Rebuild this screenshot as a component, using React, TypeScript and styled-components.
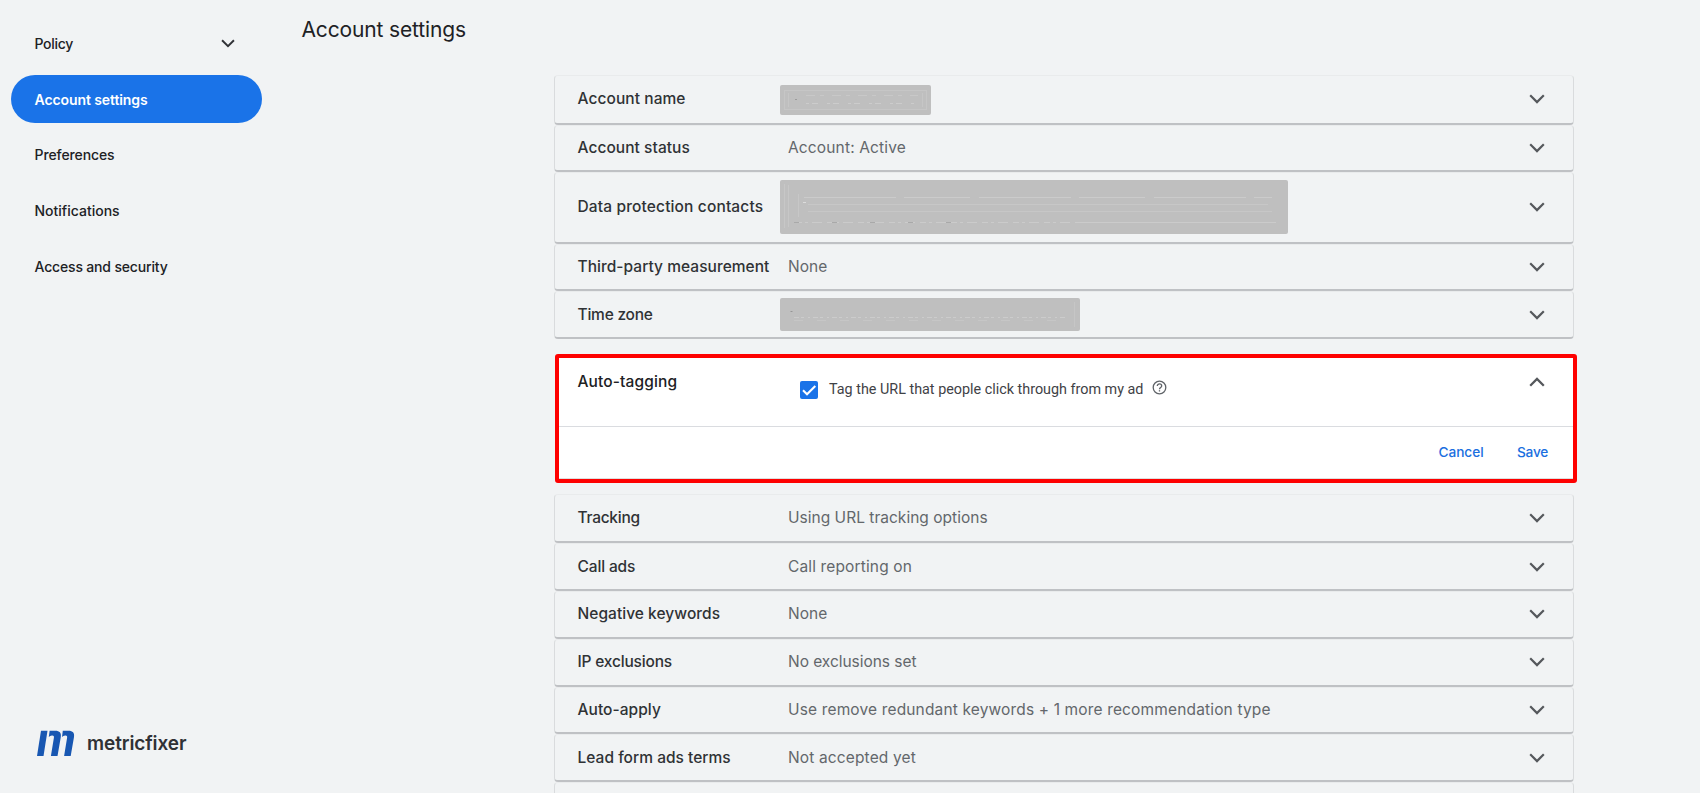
import React from 'react';
import styled, { createGlobalStyle } from 'styled-components';

const GlobalStyle = createGlobalStyle`
  * { box-sizing: border-box; }
  body {
    margin: 0;
    background: #f1f3f4;
    font-family: Inter, 'Liberation Sans', sans-serif;
    color: #202124;
    overflow: hidden;
  }
`;

const Page = styled.div`
  display: flex;
  width: 100%;
  height: 793px;
  overflow: hidden;
  background: #f1f3f4;
`;

const Sidebar = styled.aside`
  display: flex;
  flex-direction: column;
  flex-shrink: 0;
  width: 301.5px;
  height: 100%;
  padding: 19.5px 40px 36px 11px;
`;

const Nav = styled.nav`
  display: flex;
  flex-direction: column;
  gap: 7.75px;
`;

const NavItem = styled.a<{ $active?: boolean; $track?: number }>`
  display: flex;
  align-items: center;
  justify-content: space-between;
  height: 48px;
  padding: 0 26.5px 0.5px 23.5px;
  border-radius: 24px;
  background: ${(p) => (p.$active ? '#1a73e8' : 'transparent')};
  color: ${(p) => (p.$active ? '#fff' : '#202124')};
  font-size: 14px;
  font-weight: ${(p) => (p.$active ? 600 : 500)};
  letter-spacing: ${(p) => p.$track ?? 0}px;
`;

const Brand = styled.div`
  display: flex;
  align-items: center;
  gap: 12px;
  margin-top: auto;
  padding-left: 26px;
`;

const BrandName = styled.span`
  font-size: 19px;
  line-height: 24px;
  font-weight: 600;
  letter-spacing: -0.1px;
  color: #2f3135;
`;

const Main = styled.main`
  display: flex;
  flex-direction: column;
  flex: 1;
`;

const Title = styled.h1`
  flex-shrink: 0;
  height: 75px;
  margin: 0;
  padding-top: 16px;
  font-size: 21px;
  line-height: 28px;
  font-weight: 400;
  letter-spacing: -0.14px;
`;

const Panels = styled.div`
  display: flex;
  flex-direction: column;
  width: 1020px;
  margin-left: 252px;
`;

const Row = styled.section<{ $height: number }>`
  display: grid;
  grid-template-columns: 210.5px 1fr auto;
  align-items: center;
  flex-shrink: 0;
  height: ${(p) => p.$height}px;
  padding: 0 27.5px 0 23px;
  border: 1px solid #d9dbdd;
  border-top-color: #e9ebec;
  border-bottom: 2px solid #bfc1c4;
  border-radius: 4px;
`;

const Label = styled.span<{ $track?: number }>`
  font-size: 15.5px;
  line-height: 20px;
  font-weight: 500;
  color: #2f3235;
  white-space: nowrap;
  letter-spacing: ${(p) => p.$track ?? 0}px;
`;

const Value = styled(Label)`
  font-weight: 400;
  color: #63676b;
`;

const Redaction = styled.div<{ $width: number; $height: number; $shift?: number }>`
  width: ${(p) => p.$width}px;
  height: ${(p) => p.$height}px;
  margin: ${(p) => p.$shift ?? 0}px 0 0 -8.5px;
  border-radius: 2px;
  background: #bfbfbf;
  svg { display: block; }
`;

const Highlight = styled.section`
  display: flex;
  flex-direction: column;
  flex-shrink: 0;
  width: 1022.5px;
  height: 129px;
  margin: 14.5px 0 11px 1px;
  border: 4px solid #fe0000;
  border-radius: 3px;
  background: #fff;
`;

const HighlightBody = styled.div`
  display: grid;
  grid-template-columns: 222.5px 1fr auto;
  align-items: start;
  height: 69px;
  padding: 14px 28px 0 19px;
  border-bottom: 1px solid #dadce0;
`;

const HighlightTitle = styled(Label)`
  color: #202124;
`;

const Option = styled.label`
  display: flex;
  align-items: center;
  height: 20px;
  margin-top: 8px;
`;

const Checkbox = styled.span`
  display: flex;
  width: 18px;
  height: 18px;
  border-radius: 2px;
  background: #1a73e8;
`;

const OptionText = styled.span`
  margin: -1px 9px 0 11px;
  font-family: Roboto, sans-serif;
  font-size: 14.36px;
  color: #3f4246;
`;

const HelpIcon = styled.svg`
  margin-top: -4px;
`;

const Actions = styled.div`
  display: flex;
  justify-content: flex-end;
  align-items: center;
  flex: 1;
  gap: 33.5px;
  padding-right: 25px;
  border-bottom: 1px solid #dedede;
`;

const TextButton = styled.button<{ $track: number }>`
  padding: 0;
  border: 0;
  background: none;
  color: #1a6fe0;
  font: 500 13.7px/20px Inter, sans-serif;
  letter-spacing: ${(p) => p.$track}px;
`;

function Chevron({ small }: { small?: boolean }) {
  return (
    <svg width={small ? 14 : 16} height={small ? 9 : 10} viewBox="0 0 16 10">
      <path d="M1.2 1.3 8 8.1l6.8-6.8" fill="none" stroke={small ? '#303236' : '#55585c'} strokeWidth="2.2" />
    </svg>
  );
}

function ShortMarks() {
  return (
    <svg width="151" height="30" fill="none" stroke="#cccccc">
      <rect x="4.500" y="5.500" width="142" height="19" strokeOpacity=".6" />
      <path d="M8.500 8v14M142.500 8v14" strokeOpacity=".6" />
      <path d="M26 10.500h112" strokeDasharray="9 5 4 8" strokeOpacity=".7" />
      <path d="M26 18.500h110" strokeDasharray="3 3 6 9" />
      <path d="M15 14.500h2" stroke="#9c9c9c" />
    </svg>
  );
}

function LongMarks() {
  return (
    <svg width="508" height="54" fill="none" stroke="#cbcbcb">
      <path d="M4.500 4v44M8.500 5v42M18.500 14v23" strokeOpacity=".7" />
      <path d="M24 17.500h468" strokeDasharray="92 8 66 9" />
      <path d="M28 24.500h460M28 31.500h464" strokeOpacity=".7" />
      <path d="M16 42.500h284" strokeDasharray="6 3 3 4 10 5" />
      <path d="M300 42.500h196" />
      <path d="M23 22.500h3" stroke="#dcdcdc" />
      <path d="M14 42.500h160" stroke="#a9a9a9" strokeDasharray="5 33" />
    </svg>
  );
}

function ZoneMarks() {
  return (
    <svg width="300" height="33" fill="none" stroke="#cccccc">
      <path d="M14 19.500h272" strokeDasharray="5 2 3 4 2 3" />
      <path d="M14 22.500h272" strokeDasharray="9 14" strokeOpacity=".6" />
      <path d="M294.500 4v25" strokeOpacity=".6" />
      <path d="M10.500 13.500h2" stroke="#969696" />
    </svg>
  );
}

type Setting = {
  label: string;
  labelTrack?: number;
  value?: string;
  valueTrack?: number;
  height: number;
  redaction?: React.ReactNode;
};

const accountSettings: Setting[] = [
  {
    label: 'Account name', labelTrack: 0.07, height: 49.5,
    redaction: <Redaction $width={151} $height={30} $shift={1}><ShortMarks /></Redaction>,
  },
  { label: 'Account status', labelTrack: 0.05, value: 'Account: Active', valueTrack: 0.15, height: 47.5 },
  {
    label: 'Data protection contacts', labelTrack: 0.14, height: 71.5,
    redaction: <Redaction $width={508.5} $height={54}><LongMarks /></Redaction>,
  },
  { label: 'Third-party measurement', labelTrack: 0.04, value: 'None', height: 47.75 },
  {
    label: 'Time zone', labelTrack: -0.22, height: 48,
    redaction: <Redaction $width={300} $height={33}><ZoneMarks /></Redaction>,
  },
];

const campaignSettings: Setting[] = [
  { label: 'Tracking', labelTrack: -0.26, value: 'Using URL tracking options', valueTrack: 0.02, height: 49.5 },
  { label: 'Call ads', labelTrack: -0.14, value: 'Call reporting on', valueTrack: 0.14, height: 47.75 },
  { label: 'Negative keywords', labelTrack: 0.04, value: 'None', height: 47.75 },
  { label: 'IP exclusions', labelTrack: -0.18, value: 'No exclusions set', valueTrack: -0.04, height: 47.75 },
  {
    label: 'Auto-apply', labelTrack: 0.05, valueTrack: 0.15, height: 47.75,
    value: 'Use remove redundant keywords + 1 more recommendation type',
  },
  { label: 'Lead form ads terms', labelTrack: 0.02, value: 'Not accepted yet', valueTrack: 0.14, height: 47.75 },
];

function SettingRow({ item }: { item: Setting }) {
  return (
    <Row $height={item.height}>
      <Label $track={item.labelTrack}>{item.label}</Label>
      {item.redaction ?? <Value $track={item.valueTrack}>{item.value}</Value>}
      <Chevron />
    </Row>
  );
}

export default function App() {
  return (
    <Page>
      <GlobalStyle />
      <Sidebar>
        <Nav>
          <NavItem $track={-0.27}>Policy <Chevron small /></NavItem>
          <NavItem $active $track={-0.09}>Account settings</NavItem>
          <NavItem $track={-0.1}>Preferences</NavItem>
          <NavItem>Notifications</NavItem>
          <NavItem $track={-0.17}>Access and security</NavItem>
        </Nav>
        <Brand>
          <svg width="38" height="27" viewBox="0 0 38 27" fill="#1857b2">
            <path d="M4 .8h6.500L6.500 26H0z" />
            <path d="M12.600.8h5.600c4.500 0 6.200 2.200 5.600 6.200L20.500 26h-6.600l3-18.200c.3-1.800-.5-2.500-2-2.300-1.300.2-2.300.8-3.100 1.400z" />
            <path d="M25.800.8h5.600c4.500 0 6.200 2.200 5.600 6.200L33.700 26h-6.600l3-18.200c.3-1.800-.5-2.500-2-2.300-1.300.2-2.300.8-3.100 1.400z" />
          </svg>
          <BrandName>metricfixer</BrandName>
        </Brand>
      </Sidebar>
      <Main>
        <Title>Account settings</Title>
        <Panels>
          {accountSettings.map((item) => <SettingRow key={item.label} item={item} />)}
          <Highlight>
            <HighlightBody>
              <HighlightTitle $track={0.12}>Auto-tagging</HighlightTitle>
              <Option>
                <Checkbox>
                  <svg width="18" height="18" viewBox="0 0 18 18">
                    <path d="M3 9.300 7 13.200 15.300 4.900" fill="none" stroke="#fff" strokeWidth="2.1" />
                  </svg>
                </Checkbox>
                <OptionText>Tag the URL that people click through from my ad</OptionText>
                <HelpIcon width="15" height="15" viewBox="0 0 15 15" fill="none" stroke="#5f6368">
                  <circle cx="7.500" cy="7.500" r="6.300" strokeWidth="1.300" />
                  <path d="M5.300 6c0-1.300 1-2.200 2.200-2.200S9.700 4.700 9.700 5.900c0 1.500-2.200 1.700-2.200 3.300" strokeWidth="1.300" />
                  <path d="M7.500 10.200v1.300" strokeWidth="1.300" />
                </HelpIcon>
              </Option>
              <svg width="16" height="20" viewBox="0 0 16 20">
                <path d="M1.200 13.700 8 6.900l6.800 6.800" fill="none" stroke="#55585c" strokeWidth="2.300" />
              </svg>
            </HighlightBody>
            <Actions>
              <TextButton $track={-0.08}>Cancel</TextButton>
              <TextButton $track={-0.27}>Save</TextButton>
            </Actions>
          </Highlight>
          {campaignSettings.map((item) => <SettingRow key={item.label} item={item} />)}
          <Row $height={48} />
        </Panels>
      </Main>
    </Page>
  );
}
